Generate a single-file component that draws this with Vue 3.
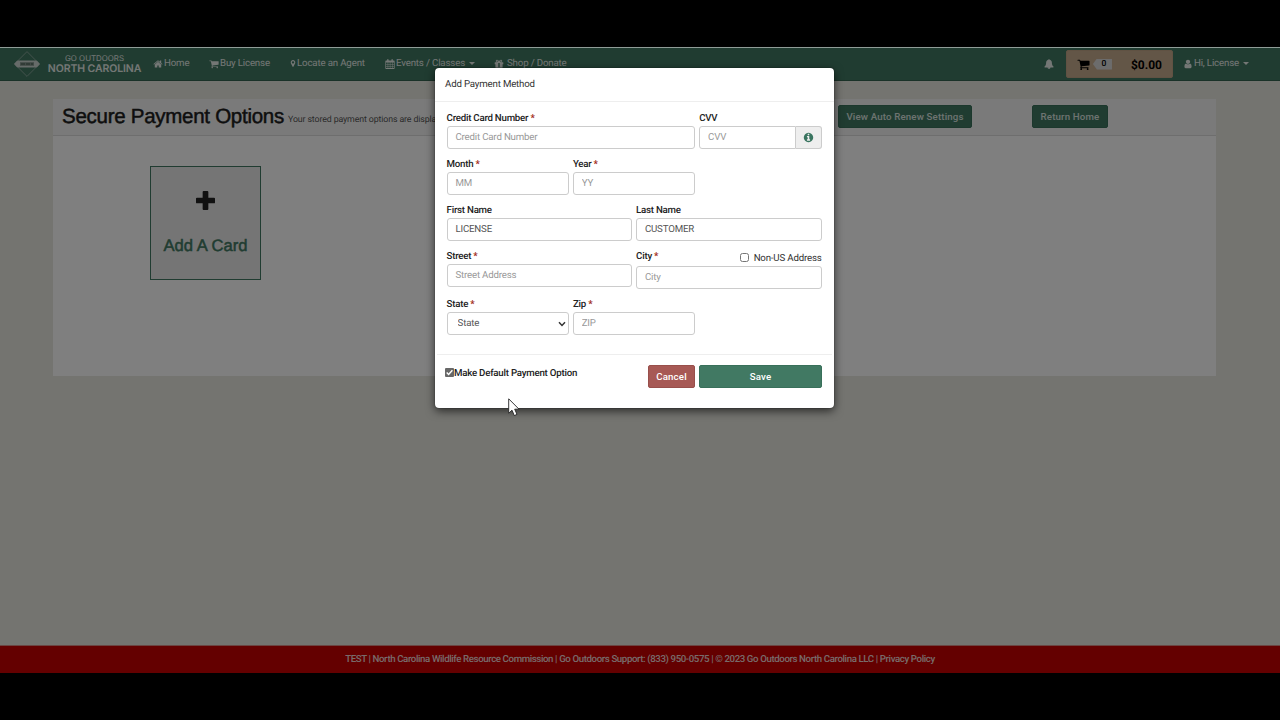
<template>
  <div class="pantalla">
    <div class="sitio">
      <nav class="navbar">
        <a class="marca">
          <svg class="logo" viewBox="0 0 26 26">
            <path d="M13 .6L25.4 13L13 25.4L.6 13Z" fill="none" stroke="#98afa6" stroke-width=".8" />
            <path d="M4 9.6H22Q23 9.6 23.5 10.2L26 13L23.5 15.8Q23 16.4 22 16.4H4Q3 16.4 2.5 15.8L0 13L2.5 10.2Q3 9.6 4 9.6Z" fill="#cdd6d2" />
            <path d="M6 11.2H20V14.8H6Z" fill="#82958d" />
            <path d="M7 13H9M10 12V14M12 13H14M15 12V14M17 13H19" stroke="#43584f" />
          </svg>
          <span class="marca-texto">
            <span class="marca-arriba">GO OUTDOORS</span>
            <span class="marca-abajo">NORTH CAROLINA</span>
          </span>
        </a>
        <a v-for="item in menu" :key="item.texto" class="nav-item" :class="item.icono">
          <svg class="icono" viewBox="0 0 1792 1792"><path :d="iconos[item.icono]" fill-rule="evenodd" /></svg>
          <span>{{ item.texto }}</span>
          <i v-if="item.flecha" class="caret"></i>
        </a>
        <div class="nav-derecha">
          <svg class="icono campana" viewBox="0 0 1792 1792"><path :d="iconos.bell" /></svg>
          <div class="carrito">
            <svg class="icono" viewBox="0 0 1792 1792"><path :d="iconos.cart" /></svg>
            <span class="cantidad">0</span>
            <b>$0.00</b>
          </div>
          <a class="usuario">
            <svg class="icono" viewBox="0 0 1792 1792"><path :d="iconos.user" /></svg>
            <span>Hi, License</span>
            <i class="caret"></i>
          </a>
        </div>
      </nav>

      <main class="panel">
        <header class="panel-titulo">
          <h1>Secure Payment Options</h1>
          <small>Your stored payment options are displa</small>
          <button class="btn renovar">View Auto Renew Settings</button>
          <button class="btn inicio">Return Home</button>
        </header>
        <div class="panel-cuerpo">
          <a class="agregar">
            <svg viewBox="0 0 20 20"><path d="M7 1Q7 0 8 0H12Q13 0 13 1V7H19Q20 7 20 8V12Q20 13 19 13H13V19Q13 20 12 20H8Q7 20 7 19V13H1Q0 13 0 12V8Q0 7 1 7H7Z" /></svg>
            <span>Add A Card</span>
          </a>
        </div>
      </main>

      <footer class="pie">
        <span>TEST | North Carolina Wildlife Resource Commission | Go Outdoors Support: (833) 950-0575 | © 2023 Go Outdoors North Carolina LLC | Privacy Policy</span>
      </footer>
      <div class="fondo"></div>
    </div>

    <div class="modal">
      <div class="modal-titulo"><span>Add Payment Method</span></div>
      <form class="formulario" @submit.prevent>
        <div class="campo c4">
          <label><span>Credit Card Number</span> <em>*</em></label>
          <input v-model="tarjeta.numero" placeholder="Credit Card Number">
        </div>
        <div class="campo c2">
          <label><span>CVV</span></label>
          <div class="grupo">
            <input v-model="tarjeta.cvv" placeholder="CVV">
            <span class="info"><svg viewBox="0 0 1792 1792"><path :d="iconos.info" /></svg></span>
          </div>
        </div>
        <div class="campo c2">
          <label><span>Month</span> <em>*</em></label>
          <input v-model="tarjeta.mes" placeholder="MM">
        </div>
        <div class="campo c2 fin">
          <label><span>Year</span> <em>*</em></label>
          <input v-model="tarjeta.anio" placeholder="YY">
        </div>
        <div class="campo c3">
          <label><span>First Name</span></label>
          <input v-model="tarjeta.nombre">
        </div>
        <div class="campo c3">
          <label><span>Last Name</span></label>
          <input v-model="tarjeta.apellido">
        </div>
        <div class="campo c3">
          <label><span>Street</span> <em>*</em></label>
          <input v-model="tarjeta.calle" placeholder="Street Address">
        </div>
        <div class="campo c3">
          <div class="ciudad">
            <label><span>City</span> <em>*</em></label>
            <label class="extranjero"><input v-model="tarjeta.extranjero" type="checkbox"><span>Non-US Address</span></label>
          </div>
          <input v-model="tarjeta.ciudad" placeholder="City">
        </div>
        <div class="campo c2">
          <label><span>State</span> <em>*</em></label>
          <div class="selector">
            <select v-model="tarjeta.estado">
              <option value="">State</option>
            </select>
            <svg viewBox="0 0 8 6"><path d="M1 1.2L4 4.4L7 1.2" fill="none" stroke="#333" stroke-width="1.5" /></svg>
          </div>
        </div>
        <div class="campo c2">
          <label><span>Zip</span> <em>*</em></label>
          <input v-model="tarjeta.zip" placeholder="ZIP">
        </div>
      </form>
      <div class="modal-pie">
        <label class="defecto" @click="tarjeta.defecto = !tarjeta.defecto">
          <svg viewBox="0 0 9 9">
            <rect width="9" height="9" rx="1" fill="#686868" />
            <path v-if="tarjeta.defecto" d="M1.7 4.6L3.6 6.5L7.4 2.2" fill="none" stroke="#fff" stroke-width="1.4" />
          </svg>
          <span>Make Default Payment Option</span>
        </label>
        <button class="btn cancelar">Cancel</button>
        <button class="btn guardar">Save</button>
      </div>
    </div>

    <svg class="cursor" viewBox="0 0 12 19">
      <path d="M.7 .8V15.2L4 12.2L6.3 17.6L9 16.4L6.7 11.2H11Z" fill="#fff" stroke="#222" stroke-width=".9" />
    </svg>
  </div>
</template>

<script setup>
import { reactive } from 'vue'

const iconos = {
  home: 'M1472 992v480q0 26-19 45t-45 19h-384v-384h-256v384h-384q-26 0-45-19t-19-45v-480q0-1 .5-3t.5-3l575-474 575 474q1 2 1 6zm223-69l-62 74q-8 9-21 11h-3q-13 0-21-7l-692-577-692 577q-12 8-24 7-13-2-21-11l-62-74q-8-10-7-23.5t11-21.5l719-599q32-26 76-26t76 26l244 204v-195q0-14 9-23t23-9h192q14 0 23 9t9 23v408l219 182q10 8 11 21.5t-7 23.5z',
  cart: 'M704 1536q0 52-38 90t-90 38-90-38-38-90 38-90 90-38 90 38 38 90zm896 0q0 52-38 90t-90 38-90-38-38-90 38-90 90-38 90 38 38 90zm128-1088v512q0 24-16.5 42.5t-40.5 21.5l-1044 122q13 60 13 70 0 16-24 64h920q26 0 45 19t19 45-19 45-45 19h-1024q-26 0-45-19t-19-45q0-11 8-31.5t16-36 21.5-40 15.5-29.5l-177-823h-204q-26 0-45-19t-19-45 19-45 45-19h256q16 0 28.5 6.5t19.5 15.5 13 24.5 8 26 5.5 29.5 4.5 26h1201q26 0 45 19t19 45z',
  marker: 'M1152 640q0-106-75-181t-181-75-181 75-75 181 75 181 181 75 181-75 75-181zm256 0q0 109-33 179l-364 774q-16 33-47.5 52t-67.5 19-67.5-19-46.5-52l-365-774q-33-70-33-179 0-212 150-362t362-150 362 150 150 362z',
  calendar: 'M64 384q0-128 128-128h192v-96q0-160 128-160t128 160v96h512v-96q0-160 128-160t128 160v96h192q128 0 128 128v1280q0 128-128 128h-1408q-128 0-128-128zM192 640v288h288v-288zM576 640v288h288v-288zM960 640v288h288v-288zM1344 640v288h256v-288zM192 1024v256h288v-256zM576 1024v256h288v-256zM960 1024v256h288v-256zM1344 1024v256h256v-256zM192 1376v256h288v-256zM576 1376v256h288v-256zM960 1376v256h288v-256zM1344 1376v256h256v-256z',
  gift: 'M128 640q0-64 64-64h340q-212-20-212-224 0-224 224-224 128 0 220 116l132 172 132-172q92-116 220-116 224 0 224 224 0 204-212 224h340q64 0 64 64v320h-128v512q0 96-96 96h-1088q-96 0-96-96v-512h-128zM544 256q-96 0-96 96t96 96h228l-128-154q-40-38-100-38zM1248 256q-60 0-100 38l-128 154h228q96 0 96-96t-96-96zM768 704v768h256v-768z',
  bell: 'M912 1696q0-16-16-16-59 0-101.5-42.5t-42.5-101.5q0-16-16-16t-16 16q0 73 51.5 124.5t124.5 51.5q16 0 16-16zm816-288q0 52-38 90t-90 38h-448q0 106-75 181t-181 75-181-75-75-181h-448q-52 0-90-38t-38-90q50-42 91-88t85-119.5 74.5-158.5 50-206 19.5-260q0-152 117-282.5t307-158.5q-8-19-8-39 0-40 28-68t68-28 68 28 28 68q0 20-8 39 190 28 307 158.5t117 282.5q0 139 19.5 260t50 206 74.5 158.5 85 119.5 91 88z',
  user: 'M1536 1399q0 109-62.5 187t-150.5 78h-854q-88 0-150.5-78t-62.5-187q0-85 8.5-160.5t31.5-152 58.5-131 94-89 134.5-34.5q131 128 313 128t313-128q76 0 134.5 34.5t94 89 58.5 131 31.5 152 8.5 160.5zm-256-887q0 159-112.5 271.5t-271.5 112.5-271.5-112.5-112.5-271.5 112.5-271.5 271.5-112.5 271.5 112.5 112.5 271.5z',
  info: 'M1152 1376v-160q0-14-9-23t-23-9h-96v-512q0-14-9-23t-23-9h-320q-14 0-23 9t-9 23v160q0 14 9 23t23 9h96v320h-96q-14 0-23 9t-9 23v160q0 14 9 23t23 9h448q14 0 23-9t9-23zm-128-896v-160q0-14-9-23t-23-9h-192q-14 0-23 9t-9 23v160q0 14 9 23t23 9h192q14 0 23-9t9-23zm640 416q0 209-103 385.5t-279.5 279.5-385.5 103-385.5-103-279.5-279.5-103-385.5 103-385.5 279.5-279.5 385.5-103 385.5 103 279.5 279.5 103 385.5z'
}

const menu = [
  { icono: 'home', texto: 'Home' },
  { icono: 'cart', texto: 'Buy License' },
  { icono: 'marker', texto: 'Locate an Agent' },
  { icono: 'calendar', texto: 'Events / Classes', flecha: true },
  { icono: 'gift', texto: 'Shop / Donate' }
]

const tarjeta = reactive({
  numero: '',
  cvv: '',
  mes: '',
  anio: '',
  nombre: 'LICENSE',
  apellido: 'CUSTOMER',
  calle: '',
  ciudad: '',
  extranjero: false,
  estado: '',
  zip: '',
  defecto: true
})
</script>

<style>
body {
  margin: 0;
  background: #000;
}
</style>

<style scoped>
* {
  box-sizing: border-box;
}
.pantalla {
  position: relative;
  width: 1280px;
  height: 720px;
  padding-top: 47px;
  overflow: hidden;
  background: #000;
  font-family: Roboto, sans-serif;
  font-size: 9.7px;
  text-rendering: geometricPrecision;
  white-space: nowrap;
}
.sitio {
  position: relative;
  display: flex;
  flex-direction: column;
  height: 626px;
  border-top: 1px solid #8f9c97;
  background: #e8e9e0;
}
.fondo {
  position: absolute;
  inset: 0;
  background: rgba(0, 0, 0, 0.5);
}
.navbar {
  display: grid;
  grid-template-columns: 153px 56px 80px 96px 109px 90px 1fr;
  align-items: center;
  height: 33px;
  background: #417963;
  border-bottom: 1px solid #356451;
  color: #e8eeeb;
}
.marca {
  display: flex;
  align-items: center;
  padding-left: 14px;
}
.logo {
  width: 26px;
  height: 26px;
  margin-right: 8px;
}
.marca-texto {
  display: flex;
  flex-direction: column;
  align-items: center;
  width: 93px;
  font-family: Inter, sans-serif;
}
.marca-arriba {
  font-size: 7.9px;
  line-height: 9px;
}
.marca-abajo {
  font-size: 10.5px;
  line-height: 11px;
  font-weight: 600;
  letter-spacing: -0.1px;
}
.nav-item,
.usuario {
  display: flex;
  align-items: center;
  padding-bottom: 1px;
  letter-spacing: -0.16px;
}
.icono {
  flex: none;
  width: 10px;
  height: 10px;
  margin-right: 1px;
  fill: currentColor;
}
.marker .icono {
  width: 8px;
  height: 11px;
  margin-right: 0;
}
.gift .icono {
  margin-right: 3px;
}
.caret {
  margin-left: 4px;
  border: 3px solid transparent;
  border-top-color: currentColor;
  border-bottom: 0;
}
.nav-derecha {
  display: flex;
  align-items: center;
  justify-content: flex-end;
  padding-right: 31px;
}
.campana {
  margin-right: 12px;
}
.carrito {
  display: flex;
  align-items: center;
  width: 107px;
  height: 28px;
  margin-right: 10px;
  padding: 0 10px;
  border: 1px solid #c0a587;
  border-radius: 2px;
  background: #c7ac8e;
  color: #000;
}
.carrito .icono {
  width: 13px;
  height: 13px;
}
.carrito b {
  margin-left: auto;
  padding-top: 1px;
  font-size: 12px;
}
.cantidad {
  width: 19px;
  height: 11px;
  margin-left: 2px;
  padding-left: 3px;
  clip-path: polygon(4px 0, 100% 0, 100% 100%, 4px 100%, 0 50%);
  background: #d9d9d9;
  font-size: 8.5px;
  font-weight: 500;
  line-height: 11px;
  text-align: center;
}
.panel {
  width: 1163px;
  height: 277px;
  margin: 18px 0 0 53px;
  background: #fff;
}
.panel-titulo {
  display: flex;
  align-items: center;
  height: 37px;
  padding: 0 0 1px 9px;
  border-bottom: 1px solid #dcdcdc;
  background: #f5f5f5;
}
h1 {
  width: 226px;
  margin: 0;
  padding-top: 1px;
  font-family: "Liberation Sans", sans-serif;
  font-size: 20.5px;
  font-weight: 400;
  letter-spacing: -0.27px;
  color: #1c1c1c;
  -webkit-text-stroke: 0.5px #1c1c1c;
}
.panel-titulo small {
  width: 550px;
  padding-top: 7px;
  font-size: 8.8px;
  letter-spacing: -0.12px;
  color: #555;
}
.btn {
  height: 23px;
  padding: 0 0 1px;
  border: 1px solid #38705a;
  border-radius: 2px;
  background: #417963;
  color: #fff;
  font-family: inherit;
  font-size: 9.7px;
  font-weight: 500;
  letter-spacing: 0.15px;
}
.panel-titulo .btn {
  color: #dce6e1;
}
.renovar {
  width: 134px;
}
.inicio {
  width: 76px;
  margin-left: 60px;
}
.panel-cuerpo {
  padding: 30px 97px;
}
.agregar {
  display: flex;
  flex-direction: column;
  align-items: center;
  width: 111px;
  height: 114px;
  padding-top: 24px;
  border: 1px solid #417963;
  background: #ebebeb;
}
.agregar svg {
  width: 19px;
  height: 19px;
  fill: #222;
}
.agregar span {
  margin-top: 26px;
  font-family: "Liberation Sans", sans-serif;
  font-size: 16.6px;
  line-height: 20px;
  color: #417963;
  -webkit-text-stroke: 0.5px #417963;
}
.pie {
  display: flex;
  align-items: center;
  justify-content: center;
  height: 28px;
  margin-top: auto;
  border-top: 1px solid #d98a84;
  background: #c80000;
  color: #f0d6d6;
  font-size: 9.7px;
  font-weight: 500;
  letter-spacing: -0.4px;
}
.modal {
  position: absolute;
  left: 435px;
  top: 68px;
  width: 399px;
  height: 340px;
  border-radius: 4px;
  background: #fff;
  box-shadow: 0 3px 10px rgba(0, 0, 0, 0.65), 0 0 1px #000;
  color: #333;
  letter-spacing: -0.18px;
}
.modal-titulo {
  height: 34px;
  padding: 10px 10px 0;
  border-bottom: 1px solid #eee;
  line-height: 13px;
}
.formulario {
  display: grid;
  grid-template-columns: repeat(6, 1fr);
  grid-auto-rows: min-content;
  gap: 9px 4px;
  height: 252px;
  padding: 10px 12.4px 0 11.6px;
}
.c2 {
  grid-column: span 2;
}
.c3 {
  grid-column: span 3;
}
.c4 {
  grid-column: span 4;
}
.fin {
  grid-column: 3 / span 2;
}
.campo label {
  display: block;
  height: 14px;
  line-height: 13px;
  font-weight: 500;
  letter-spacing: -0.24px;
  color: #222;
}
em {
  color: #a3301d;
  font-style: normal;
  font-weight: 700;
}
.ciudad {
  display: flex;
  justify-content: space-between;
  height: 16px;
}
.ciudad .extranjero {
  display: flex;
  align-items: center;
  height: 16px;
  font-weight: 400;
  letter-spacing: -0.18px;
  color: #333;
}
.extranjero input {
  width: 9px;
  height: 9px;
  margin: 0 5px 2px 0;
}
.campo > input,
.grupo input,
select {
  display: block;
  width: 100%;
  height: 23px;
  padding: 0 7.8px;
  border: 1px solid #ccc;
  border-radius: 3px;
  outline: 0;
  background: #fff;
  color: #555;
  font-family: inherit;
  font-size: 9.7px;
  letter-spacing: inherit;
  text-rendering: inherit;
}
.selector {
  display: grid;
  align-items: center;
}
.selector > * {
  grid-area: 1 / 1;
}
.selector select {
  padding: 0 10px;
  appearance: none;
}
.selector svg {
  z-index: 1;
  justify-self: end;
  width: 8px;
  height: 6px;
  margin-right: 3px;
  pointer-events: none;
}
::placeholder {
  color: #999;
}
.grupo {
  display: flex;
}
.grupo input {
  min-width: 0;
  border-radius: 3px 0 0 3px;
}
.info {
  display: flex;
  flex: none;
  align-items: center;
  justify-content: center;
  width: 26px;
  border: 1px solid #ccc;
  border-left: 0;
  border-radius: 0 3px 3px 0;
  background: #eee;
}
.info svg {
  width: 11px;
  height: 11px;
  fill: #3a7560;
}
.modal-pie {
  display: flex;
  margin: 0 2px;
  padding: 10px 10px 0 8px;
  border-top: 1px solid #eee;
}
.defecto {
  display: flex;
  align-items: center;
  height: 16px;
  margin-right: auto;
  font-weight: 500;
  letter-spacing: -0.23px;
  color: #222;
}
.defecto svg {
  width: 9px;
  height: 9px;
  margin-top: -2px;
}
.cancelar {
  width: 47px;
  margin-right: 4px;
  border-color: #984f4b;
  background: #a75955;
}
.guardar {
  width: 123px;
}
.cursor {
  position: absolute;
  left: 508px;
  top: 398px;
  width: 12px;
  height: 19px;
}
</style>
